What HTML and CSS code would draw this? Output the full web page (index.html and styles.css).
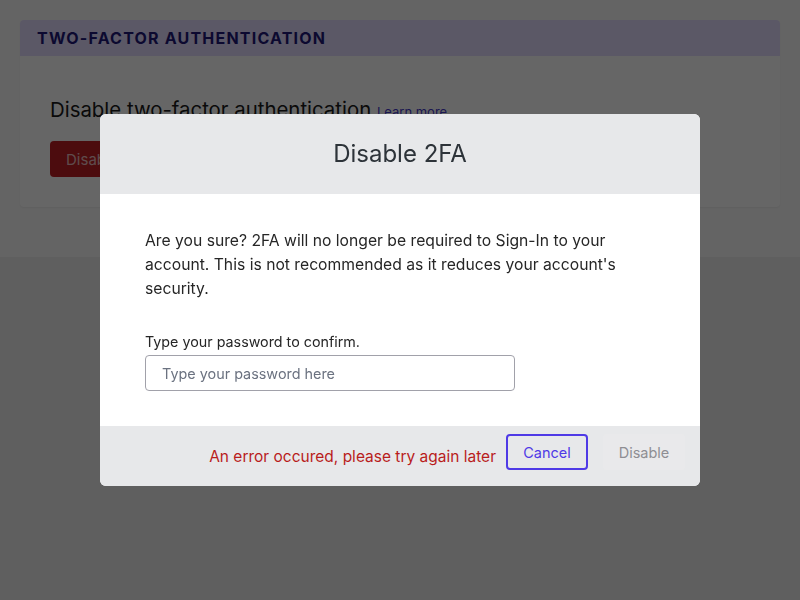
FILE: index.html
```html
<!DOCTYPE html>
<html>
<head>
<meta charset="utf-8">
<link rel="stylesheet" href="styles.css">
</head>
<body>
<div class="page">
  <section class="section">
    <div class="card">
      <div class="card-head">Two-factor authentication</div>
      <div class="card-body">
        <h2 class="card-title">Disable two-factor authentication <a class="learn" href="#">Learn more</a></h2>
        <button class="btn-danger">Disable 2FA</button>
      </div>
    </div>
  </section>
</div>
<div class="overlay">
  <div class="modal">
    <div class="modal-head">Disable 2FA</div>
    <div class="modal-body">
      <p class="msg">Are you sure? 2FA will no longer be required to Sign-In to your account. This is not recommended as it reduces your account's security.</p>
      <label class="label" for="pw">Type your password to confirm.</label>
      <input class="input" id="pw" type="password" placeholder="Type your password here">
    </div>
    <div class="modal-foot">
      <span class="error">An error occured, please try again later</span>
      <button class="btn-cancel">Cancel</button>
      <button class="btn-disable" disabled>Disable</button>
    </div>
  </div>
</div>
</body>
</html>
```
FILE: styles.css
```css
* { box-sizing: border-box; }
html, body { margin: 0; padding: 0; }
body {
  font-family: Inter, "Liberation Sans", sans-serif;
  background: #eeeeee;
  width: 800px;
  height: 600px;
  overflow: hidden;
  color: #262626;
}
.page { height: 600px; }
.section {
  background: #fafafa;
  padding: 20px 20px 50px;
}
.card {
  background: #ffffff;
  border-radius: 4px;
  box-shadow: 0 1px 2px rgba(0,0,0,0.06);
  height: 187px;
  overflow: hidden;
}
.card-head {
  background: #e3dcff;
  height: 36px;
  padding: 0 17px;
  display: flex;
  align-items: center;
  font-size: 16px;
  font-weight: 700;
  letter-spacing: 1.2px;
  text-transform: uppercase;
  color: #1e1878;
}
.card-body { padding: 41px 30px; }
.card-title {
  margin: 0;
  font-size: 20.4px;
  font-weight: 400;
  color: #1a1a1a;
}
.learn {
  font-size: 13px;
  color: #4338ca;
  text-decoration: none;
}
.btn-danger {
  margin-top: 19px;
  height: 36px;
  padding: 0 16px;
  border: 0;
  border-radius: 4px;
  background: #be1e23;
  color: rgba(255,255,255,0.72);
  font-family: inherit;
  font-size: 15px;
}
.overlay {
  position: fixed;
  inset: 0;
  background: rgba(0,0,0,0.6);
  display: flex;
  justify-content: center;
  padding-top: 114px;
}
.modal {
  width: 600px;
  height: 372px;
  border-radius: 6px;
  overflow: hidden;
  background: #fff;
  display: flex;
  flex-direction: column;
}
.modal-head {
  background: #e7e8ea;
  height: 80px;
  padding-bottom: 2px;
  display: flex;
  align-items: center;
  justify-content: center;
  font-size: 24px;
  color: #2d3339;
}
.modal-body {
  flex: 1;
  padding: 35px 45px 0;
  display: flex;
  flex-direction: column;
  align-items: flex-start;
}
.msg {
  margin: 0;
  font-size: 15.7px;
  line-height: 24px;
  color: #262626;
}
.label {
  margin-top: 31px;
  font-size: 14.3px;
  line-height: 20px;
  color: #262626;
}
.input {
  margin-top: 3px;
  width: 370px;
  height: 36px;
  border: 1px solid #a1a1aa;
  border-radius: 4px;
  padding: 0 16px;
  font-family: inherit;
  font-size: 14.4px;
  color: #262626;
}
.input::placeholder { color: #6b7280; }
.modal-foot {
  background: #e7e8ea;
  height: 60px;
  display: flex;
  align-items: flex-start;
  justify-content: flex-end;
  padding: 8px 15px 0 0;
}
.error {
  color: #b91c1c;
  font-size: 15.5px;
  line-height: 20px;
  margin-top: 13px;
  margin-right: 10px;
}
.btn-cancel {
  height: 36px;
  width: 82px;
  border: 2px solid #4f3ae6;
  border-radius: 4px;
  background: transparent;
  color: #4f3ae6;
  font-family: inherit;
  font-size: 14.5px;
}
.btn-disable {
  margin-left: 15px;
  height: 36px;
  width: 82px;
  border: 0;
  border-radius: 4px;
  background: #e9e9eb;
  color: #8e8e93;
  font-family: inherit;
  font-size: 14.5px;
}
```
